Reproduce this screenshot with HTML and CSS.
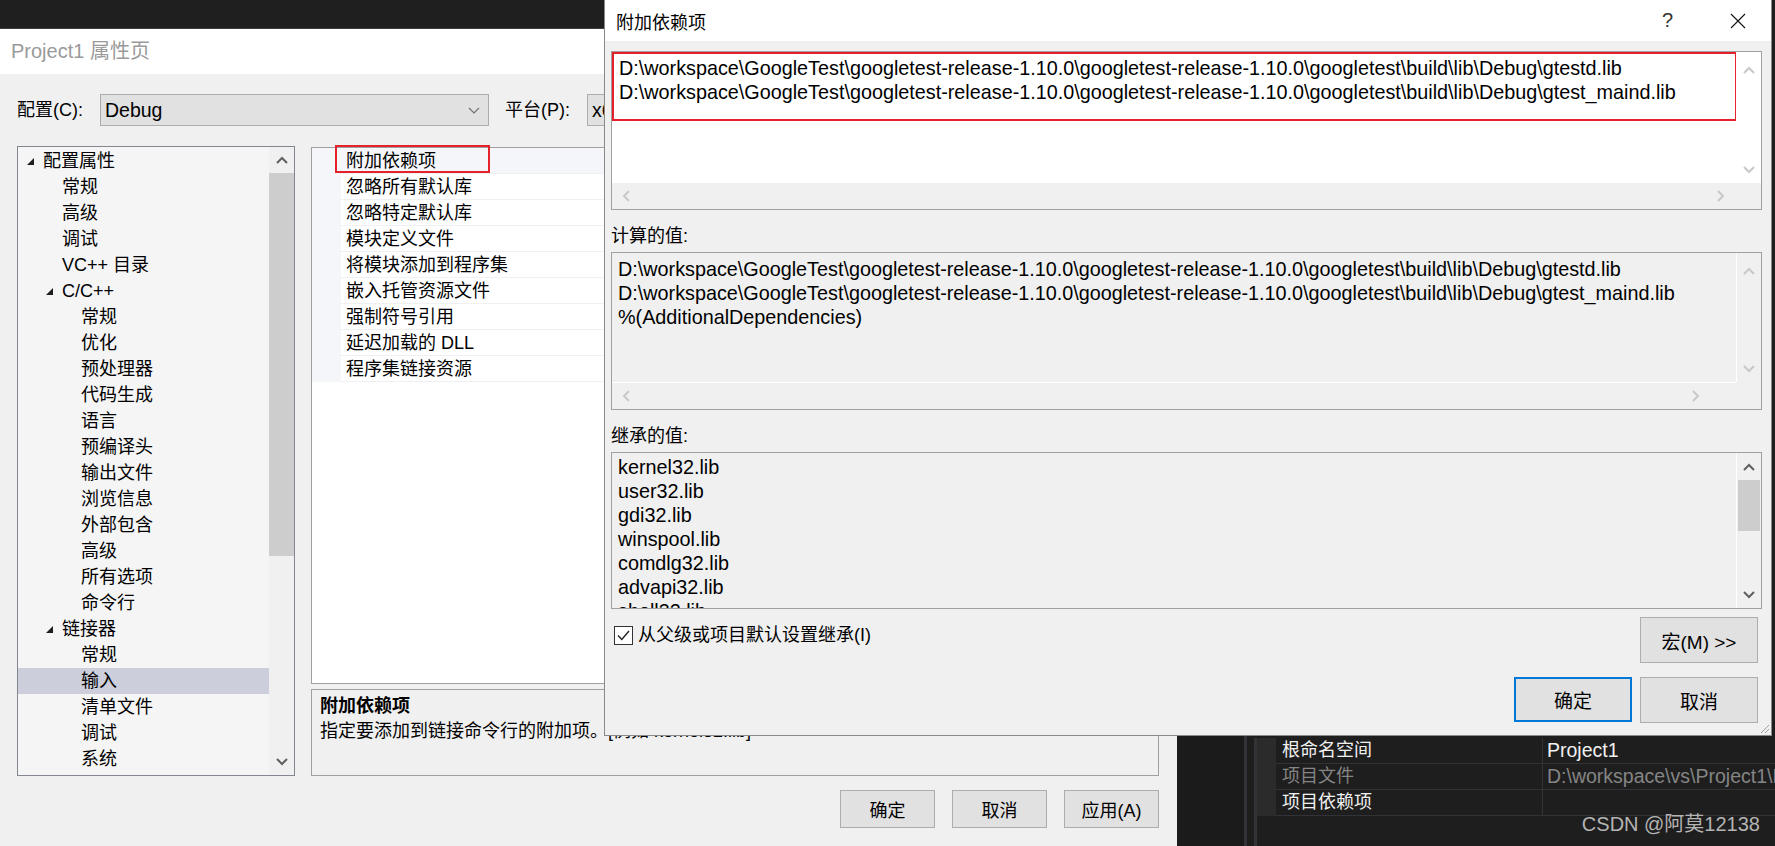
FILE: index.html
```html
<!DOCTYPE html>
<html lang="zh-CN">
<head>
  <meta charset="UTF-8" />
  <title>Project1 属性页</title>
  <link rel="stylesheet" href="styles.css">
</head>
<body>
<div class="desktop">

  <!-- 属性页主窗口 -->
  <div class="main-col">
    <div class="topbar"></div>
    <div class="prop-dialog">
      <div class="prop-title">Project1 属性页</div>
      <div class="prop-body">
        <div class="config-row">
          <span class="cfg-label">配置(C):</span>
          <div class="combo">
            <span>Debug</span>
            <svg width="12" height="7" viewBox="0 0 12 7"><path d="M1 1 6 6 11 1" fill="none" stroke="#707070" stroke-width="1.2"/></svg>
          </div>
          <span class="cfg-label platform-label">平台(P):</span>
          <div class="combo platform"><span>x64</span></div>
        </div>

        <div class="panels">
          <div class="tree">
            <div class="tree-list">
              <div class="node l1"><span class="twisty"><svg width="8" height="8" viewBox="0 0 8 8"><path d="M7 0V7H0Z" fill="#1e1e1e"/></svg></span>配置属性</div>
              <div class="node l2"><span class="twisty"></span>常规</div>
              <div class="node l2"><span class="twisty"></span>高级</div>
              <div class="node l2"><span class="twisty"></span>调试</div>
              <div class="node l2"><span class="twisty"></span>VC++ 目录</div>
              <div class="node l2"><span class="twisty"><svg width="8" height="8" viewBox="0 0 8 8"><path d="M7 0V7H0Z" fill="#1e1e1e"/></svg></span>C/C++</div>
              <div class="node l3"><span class="twisty"></span>常规</div>
              <div class="node l3"><span class="twisty"></span>优化</div>
              <div class="node l3"><span class="twisty"></span>预处理器</div>
              <div class="node l3"><span class="twisty"></span>代码生成</div>
              <div class="node l3"><span class="twisty"></span>语言</div>
              <div class="node l3"><span class="twisty"></span>预编译头</div>
              <div class="node l3"><span class="twisty"></span>输出文件</div>
              <div class="node l3"><span class="twisty"></span>浏览信息</div>
              <div class="node l3"><span class="twisty"></span>外部包含</div>
              <div class="node l3"><span class="twisty"></span>高级</div>
              <div class="node l3"><span class="twisty"></span>所有选项</div>
              <div class="node l3"><span class="twisty"></span>命令行</div>
              <div class="node l2"><span class="twisty"><svg width="8" height="8" viewBox="0 0 8 8"><path d="M7 0V7H0Z" fill="#1e1e1e"/></svg></span>链接器</div>
              <div class="node l3"><span class="twisty"></span>常规</div>
              <div class="node l3 selected"><span class="twisty"></span>输入</div>
              <div class="node l3"><span class="twisty"></span>清单文件</div>
              <div class="node l3"><span class="twisty"></span>调试</div>
              <div class="node l3"><span class="twisty"></span>系统</div>
            </div>
            <div class="tree-scroll">
              <div class="arrow-btn"><svg width="12" height="8" viewBox="0 0 12 8"><path d="M1 7 6 2 11 7" fill="none" stroke="#606060" stroke-width="2"/></svg></div>
              <div class="thumb"></div>
              <div class="track"></div>
              <div class="arrow-btn"><svg width="12" height="8" viewBox="0 0 12 8"><path d="M1 1 6 6 11 1" fill="none" stroke="#606060" stroke-width="2"/></svg></div>
            </div>
          </div>

          <div class="right-panels">
            <div class="grid-list">
              <div class="grow first"><span class="gutter"></span><span class="gname">附加依赖项<span class="mark"></span></span></div>
              <div class="grow"><span class="gutter"></span><span class="gname">忽略所有默认库</span></div>
              <div class="grow"><span class="gutter"></span><span class="gname">忽略特定默认库</span></div>
              <div class="grow"><span class="gutter"></span><span class="gname">模块定义文件</span></div>
              <div class="grow"><span class="gutter"></span><span class="gname">将模块添加到程序集</span></div>
              <div class="grow"><span class="gutter"></span><span class="gname">嵌入托管资源文件</span></div>
              <div class="grow"><span class="gutter"></span><span class="gname">强制符号引用</span></div>
              <div class="grow"><span class="gutter"></span><span class="gname">延迟加载的 DLL</span></div>
              <div class="grow"><span class="gutter"></span><span class="gname">程序集链接资源</span></div>
            </div>
            <div class="desc">
              <div class="desc-title">附加依赖项</div>
              <div class="desc-text">指定要添加到链接命令行的附加项。[例如 kernel32.lib]</div>
            </div>
          </div>
        </div>

        <div class="dialog-buttons">
          <button class="btn">确定</button>
          <button class="btn">取消</button>
          <button class="btn">应用(A)</button>
        </div>
      </div>
    </div>
  </div>

  <!-- 背后的 VS 窗口 -->
  <div class="vs-side">
    <div class="vs-rail"></div>
    <div class="vs-pane">
      <div class="vs-grid">
        <div class="vs-row"><span class="vs-gut"></span><span class="vs-name">根命名空间</span><span class="vs-val">Project1</span></div>
        <div class="vs-row dim"><span class="vs-gut"></span><span class="vs-name">项目文件</span><span class="vs-val">D:\workspace\vs\Project1\Project1.vcxproj</span></div>
        <div class="vs-row"><span class="vs-gut"></span><span class="vs-name">项目依赖项</span><span class="vs-val"></span></div>
      </div>
    </div>
  </div>

  <!-- 附加依赖项 对话框 -->
  <div class="dep-dialog">
    <div class="dep-title">
      <span>附加依赖项</span>
      <div class="title-icons">
        <span class="help">?</span>
        <svg width="16" height="16" viewBox="0 0 16 16"><path d="M1 1 15 15M15 1 1 15" stroke="#111" stroke-width="1.1"/></svg>
      </div>
    </div>
    <div class="dep-body">
      <div class="textbox edit">
        <div class="tb-content">
          <div class="red-box">
            <div class="line">D:\workspace\GoogleTest\googletest-release-1.10.0\googletest-release-1.10.0\googletest\build\lib\Debug\gtestd.lib</div>
            <div class="line">D:\workspace\GoogleTest\googletest-release-1.10.0\googletest-release-1.10.0\googletest\build\lib\Debug\gtest_maind.lib</div>
          </div>
        </div>
        <div class="vscroll light">
          <svg width="12" height="8" viewBox="0 0 12 8"><path d="M1 7 6 2 11 7" fill="none" stroke="#c8c8c8" stroke-width="2"/></svg>
          <svg width="12" height="8" viewBox="0 0 12 8"><path d="M1 1 6 6 11 1" fill="none" stroke="#c8c8c8" stroke-width="2"/></svg>
        </div>
        <div class="hscroll">
          <svg width="8" height="12" viewBox="0 0 8 12"><path d="M7 1 2 6 7 11" fill="none" stroke="#c8c8c8" stroke-width="2"/></svg>
          <svg width="8" height="12" viewBox="0 0 8 12"><path d="M1 1 6 6 1 11" fill="none" stroke="#c8c8c8" stroke-width="2"/></svg>
        </div>
      </div>

      <div class="field-label">计算的值:</div>
      <div class="textbox computed">
        <div class="tb-content">
          <div class="line">D:\workspace\GoogleTest\googletest-release-1.10.0\googletest-release-1.10.0\googletest\build\lib\Debug\gtestd.lib</div>
          <div class="line">D:\workspace\GoogleTest\googletest-release-1.10.0\googletest-release-1.10.0\googletest\build\lib\Debug\gtest_maind.lib</div>
          <div class="line">%(AdditionalDependencies)</div>
        </div>
        <div class="vscroll ro">
          <svg width="12" height="8" viewBox="0 0 12 8"><path d="M1 7 6 2 11 7" fill="none" stroke="#c8c8c8" stroke-width="2"/></svg>
          <svg width="12" height="8" viewBox="0 0 12 8"><path d="M1 1 6 6 11 1" fill="none" stroke="#c8c8c8" stroke-width="2"/></svg>
        </div>
        <div class="hscroll ro">
          <svg width="8" height="12" viewBox="0 0 8 12"><path d="M7 1 2 6 7 11" fill="none" stroke="#c8c8c8" stroke-width="2"/></svg>
          <svg width="8" height="12" viewBox="0 0 8 12"><path d="M1 1 6 6 1 11" fill="none" stroke="#c8c8c8" stroke-width="2"/></svg>
        </div>
      </div>

      <div class="field-label">继承的值:</div>
      <div class="textbox inherited">
        <div class="tb-content">
          <div class="line">kernel32.lib</div>
          <div class="line">user32.lib</div>
          <div class="line">gdi32.lib</div>
          <div class="line">winspool.lib</div>
          <div class="line">comdlg32.lib</div>
          <div class="line">advapi32.lib</div>
          <div class="line">shell32.lib</div>
        </div>
        <div class="vscroll ro dark">
          <div class="arrow-btn"><svg width="12" height="8" viewBox="0 0 12 8"><path d="M1 7 6 2 11 7" fill="none" stroke="#606060" stroke-width="2"/></svg></div>
          <div class="thumb"></div>
          <div class="track"></div>
          <div class="arrow-btn"><svg width="12" height="8" viewBox="0 0 12 8"><path d="M1 1 6 6 11 1" fill="none" stroke="#606060" stroke-width="2"/></svg></div>
        </div>
      </div>

      <div class="check-row">
        <label class="check">
          <span class="box"><svg width="15" height="15" viewBox="0 0 15 15"><path d="M2 7.5 5.8 11.5 13 3" fill="none" stroke="#222" stroke-width="1.4"/></svg></span>
          从父级或项目默认设置继承(I)
        </label>
        <button class="btn wide">宏(M) &gt;&gt;</button>
      </div>

      <div class="dep-buttons">
        <button class="btn wide default">确定</button>
        <button class="btn wide">取消</button>
      </div>
    </div>
    <svg class="grip" width="12" height="12" viewBox="0 0 12 12"><path d="M11 3 3 11M11 7 7 11" stroke="#a0a0a0" stroke-width="1"/></svg>
  </div>

  <div class="watermark">CSDN @阿莫12138</div>
</div>
</body>
</html>
```

FILE: styles.css
```css
* {
  box-sizing: border-box;
}
body {
  margin: 0;
  width: 1775px;
  height: 846px;
  overflow: hidden;
  background: #1e1e1e;
  font-family: "Liberation Sans", "Noto Sans CJK SC", sans-serif;
  font-size: 18px;
  color: #000;
}
.desktop {
  position: relative;
  display: flex;
  height: 846px;
}

/* 属性页 */
.main-col {
  width: 1177px;
  flex-shrink: 0;
  display: flex;
  flex-direction: column;
}
.topbar {
  height: 29px;
  background: #1f1f1f;
  border-bottom: 1px solid #3c3c3c;
}
.prop-dialog {
  flex: 1;
  background: #f0f0f0;
}
.prop-title {
  height: 45px;
  background: #fff;
  padding-left: 11px;
  font-size: 20px;
  line-height: 45px;
  color: #9a9a9a;
}
.prop-body {
  padding: 20px 18px 0 17px;
}
.config-row {
  display: flex;
  align-items: center;
  height: 32px;
}
.cfg-label {
  width: 83px;
  line-height: 32px;
}
.platform-label {
  width: 82px;
  margin-left: 16px;
}
.combo {
  width: 389px;
  height: 32px;
  border: 1px solid #adadad;
  background: #e1e1e1;
  display: flex;
  align-items: center;
  justify-content: space-between;
  padding: 0 8px 0 4px;
  font-size: 19.5px;
}
.combo.platform {
  width: 200px;
}

.panels {
  display: flex;
  gap: 16px;
  margin-top: 20px;
}
.tree {
  width: 278px;
  height: 630px;
  border: 1px solid #828790;
  background: #f5f5f5;
  display: flex;
}
.tree-list {
  flex: 1;
  padding-top: 1px;
}
.node {
  height: 26px;
  display: flex;
  align-items: center;
  line-height: 26px;
  white-space: nowrap;
}
.node.l1 { padding-left: 8px; }
.node.l2 { padding-left: 27px; }
.node.l3 { padding-left: 46px; }
.node.selected {
  background: #cccedb;
}
.twisty {
  width: 17px;
  display: flex;
  align-items: center;
  padding-left: 1px;
  padding-top: 2px;
}
.tree-scroll {
  width: 25px;
  display: flex;
  flex-direction: column;
  background: #f0f0f0;
}
.arrow-btn {
  height: 26px;
  display: flex;
  align-items: center;
  justify-content: center;
}
.tree-scroll .thumb {
  height: 383px;
  background: #cdcdcd;
}
.track {
  flex: 1;
}

.right-panels {
  flex: 1;
  min-width: 0;
  display: flex;
  flex-direction: column;
}
.grid-list {
  margin-top: 1px;
  height: 537px;
  border: 1px solid #a0a0a0;
  background: #fff;
}
.grow {
  display: flex;
  height: 26px;
  line-height: 26px;
}
.gutter {
  width: 29px;
  background: #f5f6f9;
}
.gname {
  position: relative;
  flex: 1;
  padding-left: 5px;
  border-bottom: 1px solid #eef0f3;
}
.grow.first .gname {
  background: #f5f6f9;
}
.mark {
  position: absolute;
  left: -6px;
  top: -3px;
  width: 155px;
  height: 28px;
  border: 2px solid #e52129;
}
.desc {
  margin-top: 5px;
  height: 87px;
  border: 1px solid #a0a0a0;
  padding: 4px 8px;
  line-height: 25px;
}
.desc-title {
  font-weight: bold;
}
.desc-text {
  white-space: nowrap;
}

.dialog-buttons {
  display: flex;
  justify-content: flex-end;
  gap: 17px;
  margin-top: 14px;
}
.btn {
  width: 95px;
  height: 38px;
  border: 1px solid #adadad;
  background: #e1e1e1;
  font-family: inherit;
  font-size: 18px;
  color: #000;
  padding: 0;
}

/* 背后的 VS 窗口 */
.vs-side {
  flex: 1;
  min-width: 0;
  display: flex;
}
.vs-rail {
  width: 67px;
  flex-shrink: 0;
  background: #1b1b1c;
}
.vs-pane {
  flex: 1;
  min-width: 0;
  border-left: 3px solid #333337;
  padding: 738px 0 0 7px;
}
.vs-grid {
  border-left: 3px solid #333337;
  height: 100%;
}
.vs-row {
  display: flex;
  height: 26px;
  line-height: 25px;
  color: #f1f1f1;
  white-space: nowrap;
}
.vs-row.dim {
  color: #858585;
}
.vs-gut {
  width: 19px;
  flex-shrink: 0;
  background: #2b2b2b;
}
.vs-name {
  width: 267px;
  flex-shrink: 0;
  padding-left: 6px;
  border-bottom: 1px solid #333337;
  border-right: 1px solid #333337;
}
.vs-val {
  flex: 1;
  min-width: 0;
  padding-left: 4px;
  border-bottom: 1px solid #333337;
  overflow: hidden;
  font-size: 19.5px;
}

/* 附加依赖项 对话框 */
.dep-dialog {
  position: absolute;
  left: 604px;
  top: 0;
  width: 1168px;
  height: 736px;
  background: #f0f0f0;
  border: 1px solid #8a8a8a;
  border-top: none;
}
.dep-title {
  height: 41px;
  background: #fff;
  display: flex;
  align-items: center;
  justify-content: space-between;
  padding: 0 25px 0 11px;
}
.title-icons {
  display: flex;
  align-items: center;
  gap: 57px;
}
.help {
  font-size: 20px;
  color: #333;
}
.dep-body {
  padding: 10px 9px 0 6px;
}
.textbox {
  display: grid;
  grid-template-columns: 1fr 25px;
  border: 1px solid #a0a0a0;
  font-size: 19.8px;
}
.textbox.edit {
  height: 159px;
  grid-template-rows: 131px 26px;
  background: #fff;
}
.textbox.computed {
  height: 158px;
  grid-template-rows: 129px 27px;
}
.textbox.inherited {
  height: 157px;
}
.tb-content {
  padding: 2px 0 0 6px;
  overflow: hidden;
  white-space: nowrap;
}
.computed .tb-content {
  padding-top: 4px;
}
.edit .tb-content {
  padding: 0;
}
.line {
  height: 24px;
  line-height: 24px;
}
.red-box {
  border: 2px solid #e52129;
  height: 69px;
  margin-right: -1px;
  padding: 2px 0 0 5px;
}
.vscroll {
  display: flex;
  flex-direction: column;
  align-items: center;
  justify-content: space-between;
  padding: 14px 0 9px;
}
.vscroll.ro {
  border-left: 1px solid #fff;
}
.vscroll.dark {
  padding: 0;
  justify-content: flex-start;
  align-items: stretch;
}
.vscroll.dark .arrow-btn {
  height: 27px;
}
.vscroll.dark .thumb {
  height: 51px;
  margin: 0 1px;
  background: #cdcdcd;
}
.hscroll {
  grid-column: 1 / 3;
  display: flex;
  align-items: center;
  justify-content: space-between;
  padding: 0 36px 0 10px;
  background: #f0f0f0;
}
.hscroll.ro {
  grid-column: 1 / 2;
  border-top: 1px solid #fff;
}
.field-label {
  line-height: 22px;
  margin: 15px 0 5px;
}
.check-row {
  display: flex;
  justify-content: space-between;
  align-items: flex-start;
  margin-top: 8px;
  padding-right: 4px;
}
.check {
  display: flex;
  align-items: center;
  gap: 5px;
  margin: 8px 0 0 3px;
  line-height: 20px;
}
.box {
  width: 19px;
  height: 19px;
  border: 1px solid #333;
  background: #fff;
  display: flex;
  align-items: center;
  justify-content: center;
}
.btn.wide {
  width: 118px;
  height: 46px;
  font-size: 19px;
}
.dep-buttons {
  display: flex;
  justify-content: flex-end;
  gap: 8px;
  margin-top: 14px;
  padding-right: 4px;
}
.btn.default {
  height: 45px;
  border: 2px solid #0078d7;
}
.grip {
  position: absolute;
  right: 1px;
  bottom: 1px;
}

.watermark {
  position: absolute;
  right: 15px;
  bottom: 9px;
  font-size: 20px;
  color: #b4b4b4;
}
```
